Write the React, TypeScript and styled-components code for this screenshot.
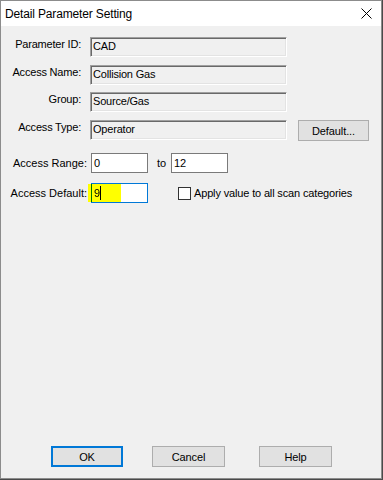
import React from "react";
import styled, { createGlobalStyle } from "styled-components";

const GlobalStyle = createGlobalStyle`
  html, body {
    margin: 0;
    padding: 0;
    background: #4a4a4a;
  }
  body {
    font-family: "Liberation Sans", Arial, sans-serif;
    font-size: 11px;
    color: #000;
  }
  * { box-sizing: border-box; }
`;

const Dialog = styled.div`
  width: 382px;
  height: 479px;
  background: #f0f0f0;
  border: 1px solid #8c8c8c;
  display: flex;
  flex-direction: column;
`;

const TitleBar = styled.div`
  height: 25px;
  background: #ffffff;
  display: flex;
  align-items: center;
  justify-content: space-between;
  padding: 0 9px 0 4px;
`;

const TitleText = styled.span`
  font-family: "Liberation Sans", Arial, sans-serif;
  font-size: 12px;
  letter-spacing: -0.15px;
  color: #000;
`;

const CloseIcon = styled.svg`
  width: 11px;
  height: 11px;
  display: block;
`;

const Body = styled.div`
  flex: 1;
  padding-top: 11px;
  display: flex;
  flex-direction: column;
`;

const FieldGrid = styled.div`
  display: grid;
  grid-template-columns: 80px 197px 73px;
  grid-template-rows: 20px 20px 20px 20px;
  column-gap: 9px;
  row-gap: 7.7px;
  align-items: start;
`;

const FieldLabel = styled.span`
  text-align: right;
  line-height: 14px;
  letter-spacing: -0.2px;
  white-space: nowrap;
`;

const ReadOnlyBox = styled.div`
  height: 20px;
  background: #f0f0f0;
  border-top: 1px solid #a0a0a0;
  border-left: 1px solid #a0a0a0;
  border-bottom: 1px solid #ffffff;
  border-right: 1px solid #ffffff;
  box-shadow: inset 1px 1px 0 #696969, inset -1px -1px 0 #e3e3e3;
  padding: 1px 3px 0 2px;
  line-height: 14px;
  letter-spacing: -0.2px;
  white-space: nowrap;
`;

const PushButton = styled.div<{ $primary?: boolean; $offset?: number }>`
  height: 21px;
  background: #e1e1e1;
  border: ${(p) => (p.$primary ? "2px solid #0078d7" : "1px solid #adadad")};
  display: flex;
  align-items: center;
  justify-content: center;
  letter-spacing: -0.1px;
  white-space: nowrap;
  margin-left: ${(p) => p.$offset ?? 0}px;
`;

const DefaultButton = styled(PushButton)`
  margin-left: 2px;
`;

const RangeSection = styled.div`
  margin-top: 13px;
  display: flex;
  flex-direction: column;
  gap: 10px;
`;

const RangeRow = styled.div`
  display: flex;
  align-items: center;
  height: 20px;
`;

const RangeLabel = styled.span`
  width: 86px;
  margin-right: 4px;
  text-align: right;
  line-height: 14px;
  letter-spacing: 0px;
  white-space: nowrap;
  padding-bottom: 1px;
`;

const InputWrap = styled.div`
  position: relative;
  isolation: isolate;
`;

const EditBox = styled.div<{ $focused?: boolean }>`
  width: 57px;
  height: 20px;
  background: #ffffff;
  border: 1px solid ${(p) => (p.$focused ? "#0078d7" : "#7a7a7a")};
  padding: 0 2px;
  display: flex;
  align-items: center;
  line-height: 14px;
  white-space: nowrap;
`;

const Caret = styled.span`
  display: inline-block;
  width: 1px;
  height: 14px;
  background: #000;
`;

const Highlight = styled.span`
  position: absolute;
  left: -3px;
  top: 1px;
  width: 33px;
  height: 18px;
  background: #ffff00;
  mix-blend-mode: multiply;
  filter: blur(0.4px);
  pointer-events: none;
`;

const ToText = styled.span`
  width: 23px;
  padding-left: 9px;
  line-height: 14px;
`;

const CheckRow = styled.label`
  display: flex;
  align-items: center;
  margin-left: 30px;
  gap: 3px;
`;

const CheckBox = styled.span`
  width: 13px;
  height: 13px;
  background: #ffffff;
  border: 1px solid #333333;
`;

const CheckText = styled.span`
  line-height: 14px;
  letter-spacing: -0.15px;
  white-space: nowrap;
`;

const ButtonRow = styled.div`
  display: flex;
  padding: 0 0 11px 50px;
`;

const fields = [
  { label: "Parameter ID:", value: "CAD" },
  { label: "Access Name:", value: "Collision Gas" },
  { label: "Group:", value: "Source/Gas" },
  { label: "Access Type:", value: "Operator" },
];

export default function App() {
  return (
    <>
      <GlobalStyle />
      <Dialog>
        <TitleBar>
          <TitleText>Detail Parameter Setting</TitleText>
          <CloseIcon viewBox="0 0 11 11">
            <path d="M0.5 0.5 L10.5 10.5 M10.5 0.5 L0.5 10.5" stroke="#000" strokeWidth="1" fill="none" />
          </CloseIcon>
        </TitleBar>
        <Body>
          <FieldGrid>
            {fields.map((f, i) => (
              <React.Fragment key={f.label}>
                <FieldLabel>{f.label}</FieldLabel>
                <ReadOnlyBox>{f.value}</ReadOnlyBox>
                {i === 3 ? <DefaultButton>Default...</DefaultButton> : <span />}
              </React.Fragment>
            ))}
          </FieldGrid>
          <RangeSection>
            <RangeRow>
              <RangeLabel>Access Range:</RangeLabel>
              <EditBox>0</EditBox>
              <ToText>to</ToText>
              <EditBox>12</EditBox>
            </RangeRow>
            <RangeRow>
              <RangeLabel>Access Default:</RangeLabel>
              <InputWrap>
                <EditBox $focused>
                  9<Caret />
                </EditBox>
                <Highlight />
              </InputWrap>
              <CheckRow>
                <CheckBox />
                <CheckText>Apply value to all scan categories</CheckText>
              </CheckRow>
            </RangeRow>
          </RangeSection>
        </Body>
        <ButtonRow>
          <PushButton $primary style={{ width: 72 }}>OK</PushButton>
          <PushButton $offset={29} style={{ width: 73 }}>Cancel</PushButton>
          <PushButton $offset={34} style={{ width: 73 }}>Help</PushButton>
        </ButtonRow>
      </Dialog>
    </>
  );
}
